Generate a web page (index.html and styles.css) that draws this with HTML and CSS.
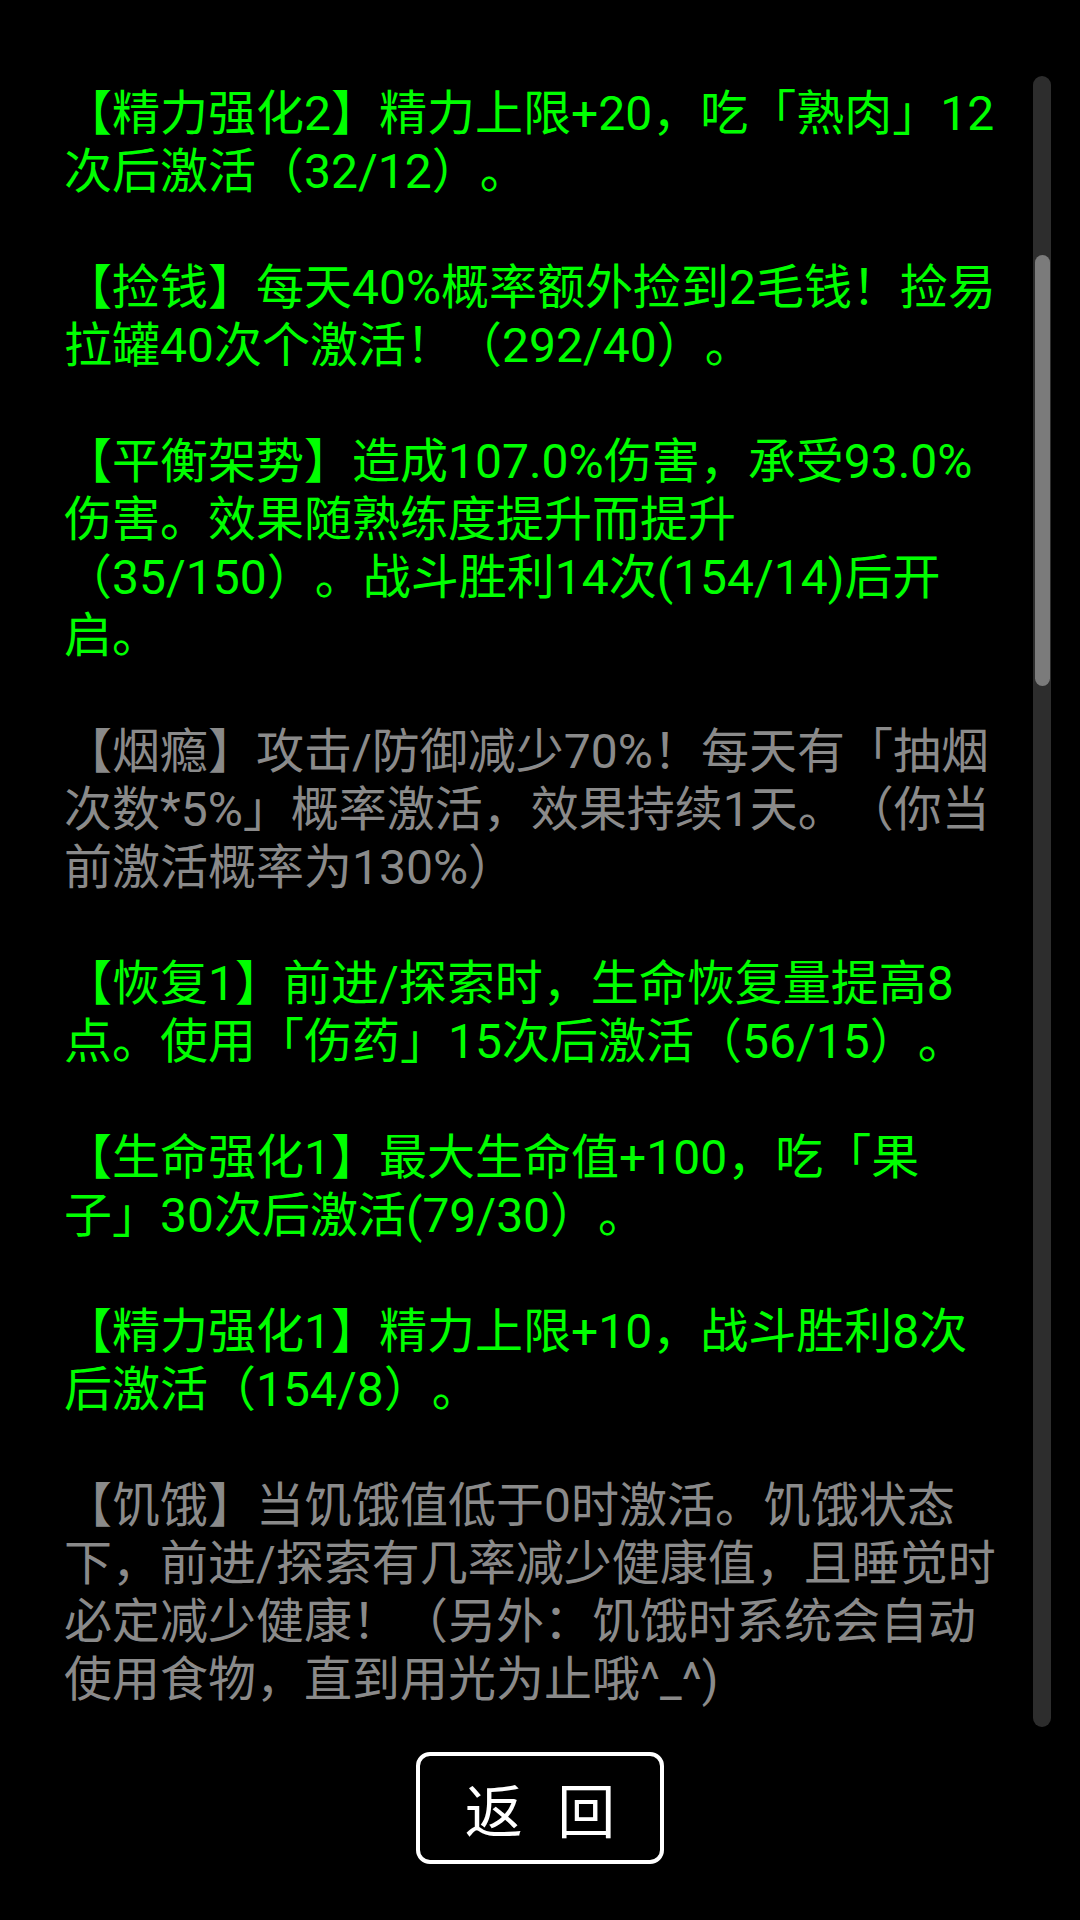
FILE: index.html
```html
<!DOCTYPE html>
<html lang="zh-CN">
<head>
    <meta charset="UTF-8">
    <meta name="viewport" content="width=device-width, initial-scale=1.0">
    <title>状态说明</title>
    <link rel="stylesheet" href="styles.css">
</head>
<body>
    <div class="screen">
        <div class="panel">
            <div class="log">
                <p class="on">【精力强化2】精力上限+20，吃「熟肉」12次后激活（32/12）。</p>
                <p class="on">【捡钱】每天40%概率额外捡到2毛钱！捡易拉罐40次个激活！（292/40）。</p>
                <p class="on">【平衡架势】造成107.0%伤害，承受93.0%伤害。效果随熟练度提升而提升（35/150）。战斗胜利14次(154/14)后开启。</p>
                <p class="off">【烟瘾】攻击/防御减少70%！每天有「抽烟次数*5%」概率激活，效果持续1天。（你当前激活概率为130%）</p>
                <p class="on">【恢复1】前进/探索时，生命恢复量提高8点。使用「伤药」15次后激活（56/15）。</p>
                <p class="on">【生命强化1】最大生命值+100，吃「果子」30次后激活(79/30）。</p>
                <p class="on">【精力强化1】精力上限+10，战斗胜利8次后激活（154/8）。</p>
                <p class="off">【饥饿】当饥饿值低于0时激活。饥饿状态下，前进/探索有几率减少健康值，且睡觉时必定减少健康！（另外：饥饿时系统会自动使用食物，直到用光为止哦^_^)</p>
            </div>
            <div class="scrollbar">
                <div class="thumb"></div>
            </div>
        </div>
        <div class="footer">
            <button class="back" type="button">返 回</button>
        </div>
    </div>
</body>
</html>
```

FILE: styles.css
```css
body {
    margin: 0;
    padding: 0;
    background: #000;
    font-family: Roboto, "Noto Sans CJK SC", sans-serif;
}

.screen {
    width: 1080px;
    height: 1920px;
    display: flex;
    flex-direction: column;
}

.panel {
    margin-top: 76px;
    height: 1651px;
    display: flex;
    justify-content: space-between;
}

.log {
    width: 940px;
    padding: 9px 0 0 64px;
    font-size: 48px;
    line-height: 58px;
    /* keep full-width punctuation full width, like the phone does */
    text-spacing-trim: space-all;
    overflow: hidden;
}

.log p {
    margin: 0 0 58px 0;
}

.on {
    color: #00ff00;
}

.off {
    color: #8a8a8a;
}

/* fake scroll track, content is scrolled a bit */
.scrollbar {
    width: 18px;
    margin-right: 29px;
    background: #2d2d2d;
    border-radius: 9px;
}

.thumb {
    width: 15px;
    height: 431px;
    margin: 179px auto 0 auto;
    background: #7b7b7b;
    border-radius: 8px;
}

.footer {
    display: flex;
    justify-content: center;
    padding-top: 25px;
}

.back {
    width: 248px;
    height: 112px;
    padding: 0 0 0 10px;
    border: 4px solid #fff;
    border-radius: 14px;
    background: #000;
    color: #fff;
    font-family: Roboto, "Noto Sans CJK SC", sans-serif;
    font-size: 58px;
    letter-spacing: 10px;
    cursor: pointer;
}
```
